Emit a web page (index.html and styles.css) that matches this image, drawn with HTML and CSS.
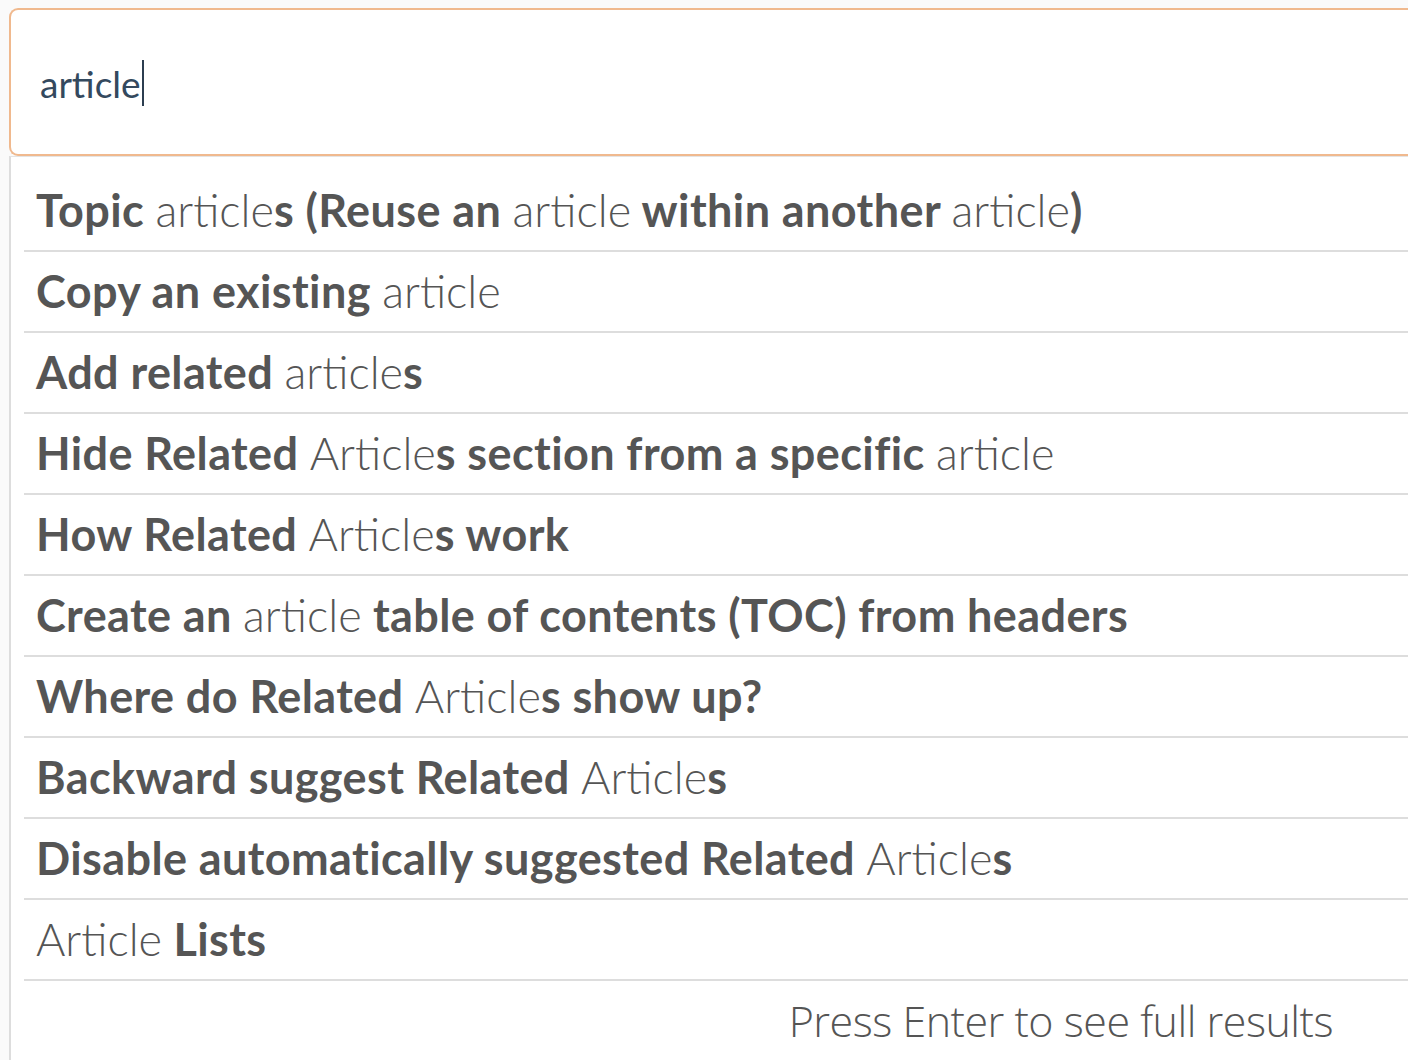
FILE: index.html
```html
<!DOCTYPE html>
<html lang="en">
<head>
<meta charset="utf-8">
<title>Search</title>
<link rel="stylesheet" href="styles.css">
</head>
<body>
<div class="search">
  <div class="search-box">
    <span class="query">article</span><span class="caret"></span>
  </div>
  <div class="dropdown">
    <ul class="results">
      <li class="result">Topic <span class="match">article</span>s (Reuse an <span class="match">article</span> within another <span class="match">article</span>)</li>
      <li class="result">Copy an existing <span class="match">article</span></li>
      <li class="result">Add related <span class="match">article</span>s</li>
      <li class="result">Hide Related <span class="match">Article</span>s section from a specific <span class="match">article</span></li>
      <li class="result">How Related <span class="match">Article</span>s work</li>
      <li class="result">Create an <span class="match">article</span> table of contents (TOC) from headers</li>
      <li class="result">Where do Related <span class="match">Article</span>s show up?</li>
      <li class="result">Backward suggest Related <span class="match">Article</span>s</li>
      <li class="result">Disable automatically suggested Related <span class="match">Article</span>s</li>
      <li class="result"><span class="match">Article</span> Lists</li>
    </ul>
    <div class="footer">Press Enter to see full results</div>
  </div>
</div>
</body>
</html>
```

FILE: styles.css
```css
html, body {
  margin: 0;
  padding: 0;
  background: #fafafa;
  overflow: hidden;
}

body {
  font-family: "Lato", "Open Sans", sans-serif;
  color: #555555;
}

.search {
  padding: 8px 0 0 9px;
}

.search-box {
  box-sizing: border-box;
  height: 148px;
  border: 2px solid #f0b98e;
  border-right: none;
  border-radius: 9px 0 0 9px;
  background: #ffffff;
  display: flex;
  align-items: center;
  padding-left: 29px;
  padding-top: 2px;
}

.query {
  font-size: 37px;
  font-weight: 400;
  color: #34495e;
  letter-spacing: 0;
}

.caret {
  display: inline-block;
  width: 2px;
  height: 46px;
  background: #2c3e50;
  margin-left: 1px;
}

.dropdown {
  background: #ffffff;
  border-left: 2px solid #dddddd;
  border-top: 1px solid #e4e4e4;
  padding-top: 14px;
  min-height: 920px;
}

.results {
  list-style: none;
  margin: 0 0 0 13px;
  padding: 0;
}

.result {
  height: 79px;
  line-height: 79px;
  padding-left: 12px;
  border-bottom: 2px solid #dddddd;
  font-size: 45px;
  font-weight: 700;
  letter-spacing: 0.4px;
  white-space: nowrap;
}

.match {
  font-weight: 300;
  letter-spacing: 0;
}

.footer {
  height: 80px;
  line-height: 80px;
  text-align: right;
  padding-right: 75px;
  font-family: "Open Sans", sans-serif;
  font-size: 43px;
  font-weight: 300;
  letter-spacing: -0.5px;
  color: #555555;
}
```
